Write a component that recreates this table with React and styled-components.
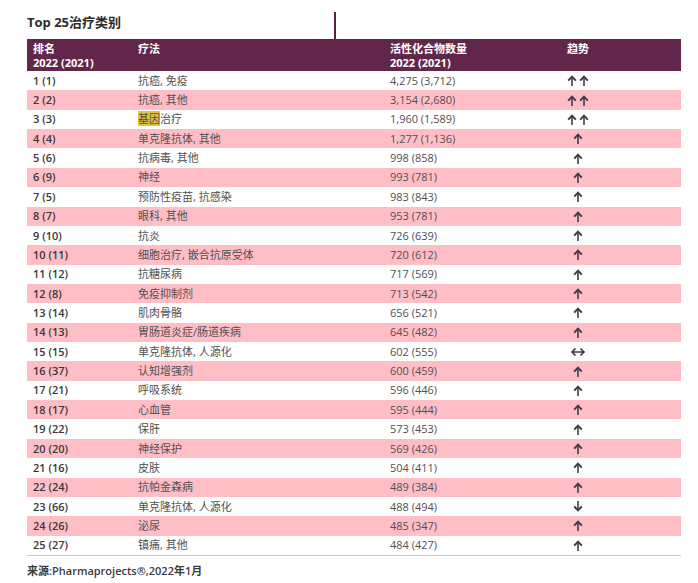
import styled, { createGlobalStyle } from 'styled-components';

const GlobalStyle = createGlobalStyle`
  body {
    margin: 0;
    background: #fff;
    font-family: 'Open Sans', 'Noto Sans CJK SC', sans-serif;
  }
`;

const rows = [
  ['1 (1)', '抗癌, 免疫', '4,275 (3,712)', 'up2'],
  ['2 (2)', '抗癌, 其他', '3,154 (2,680)', 'up2'],
  ['3 (3)', 'gene', '1,960 (1,589)', 'up2'],
  ['4 (4)', '单克隆抗体, 其他', '1,277 (1,136)', 'up'],
  ['5 (6)', '抗病毒, 其他', '998 (858)', 'up'],
  ['6 (9)', '神经', '993 (781)', 'up'],
  ['7 (5)', '预防性疫苗, 抗感染', '983 (843)', 'up'],
  ['8 (7)', '眼科, 其他', '953 (781)', 'up'],
  ['9 (10)', '抗炎', '726 (639)', 'up'],
  ['10 (11)', '细胞治疗, 嵌合抗原受体', '720 (612)', 'up'],
  ['11 (12)', '抗糖尿病', '717 (569)', 'up'],
  ['12 (8)', '免疫抑制剂', '713 (542)', 'up'],
  ['13 (14)', '肌肉骨骼', '656 (521)', 'up'],
  ['14 (13)', '胃肠道炎症/肠道疾病', '645 (482)', 'up'],
  ['15 (15)', '单克隆抗体, 人源化', '602 (555)', 'flat'],
  ['16 (37)', '认知增强剂', '600 (459)', 'up'],
  ['17 (21)', '呼吸系统', '596 (446)', 'up'],
  ['18 (17)', '心血管', '595 (444)', 'up'],
  ['19 (22)', '保肝', '573 (453)', 'up'],
  ['20 (20)', '神经保护', '569 (426)', 'up'],
  ['21 (16)', '皮肤', '504 (411)', 'up'],
  ['22 (24)', '抗帕金森病', '489 (384)', 'up'],
  ['23 (66)', '单克隆抗体, 人源化', '488 (494)', 'down'],
  ['24 (26)', '泌尿', '485 (347)', 'up'],
  ['25 (27)', '镇痛, 其他', '484 (427)', 'up'],
];

const Page = styled.div`
  padding-left: 27px;
  width: 654px;
`;

const TitleBar = styled.div`
  display: flex;
  align-items: flex-end;
  height: 39px;
`;

const Title = styled.div`
  width: 307px;
  align-self: center;
  padding-top: 4px;
  font-size: 13px;
  font-weight: 700;
  color: #2b2b2b;
`;

const Mark = styled.div`
  width: 2px;
  height: 27px;
  background: #5a2245;
`;

const Grid = styled.div`
  display: grid;
  grid-template-columns: 105px 252px 162px 52px 1fr;
  padding-left: 6px;
  align-items: center;
`;

const Head = styled(Grid)`
  height: 32px;
  align-items: start;
  padding-top: 3px;
  box-sizing: border-box;
  background: #62264b;
  color: #fff;
  font-size: 11px;
  font-weight: 700;
  line-height: 14px;
`;

const Row = styled(Grid)`
  height: 19.36px;
  background: ${(p) => (p.$pink ? '#ffbec6' : '#fff')};
  color: #505050;
  font-size: 11px;
  line-height: 14px;
`;

const Rank = styled.div`
  color: #383838;
  font-weight: 600;
`;

const Trend = styled.div`
  display: flex;
  justify-content: center;
  gap: 2px;
`;

const HeadTrend = styled.div`
  text-align: center;
`;

const Highlight = styled.span`
  background: #e2c23c;
`;

const Footer = styled.div`
  border-top: 1px solid #f2b6be;
  padding-top: 6px;
  font-size: 11px;
  font-weight: 600;
  color: #3a3a3a;
`;

function Arrow({ dir }) {
  if (dir === 'flat') {
    return (
      <svg width="16" height="10" viewBox="0 0 16 10">
        <path d="M2 5 H14 M5.5 1.5 L2 5 L5.5 8.5 M10.5 1.5 L14 5 L10.5 8.5" stroke="#3d3d48" strokeWidth="1.7" fill="none" />
      </svg>
    );
  }
  const rot = dir === 'down' ? 'rotate(180 5 5.5)' : undefined;
  return (
    <svg width="10" height="11" viewBox="0 0 10 11">
      <g transform={rot} stroke="#3d3d48" fill="none">
        <path d="M5 2 V11" strokeWidth="1.6" />
        <path d="M1.2 5.6 L5 1.6 L8.8 5.6" strokeWidth="2" />
      </g>
    </svg>
  );
}

export default function App() {
  return (
    <>
      <GlobalStyle />
      <Page>
        <TitleBar>
          <Title>Top 25治疗类别</Title>
          <Mark />
        </TitleBar>
        <Head>
          <div>排名<br />2022 (2021)</div>
          <div>疗法</div>
          <div>活性化合物数量<br />2022 (2021)</div>
          <HeadTrend>趋势</HeadTrend>
          <div />
        </Head>
        {rows.map((r, i) => (
          <Row key={i} $pink={i % 2 === 1}>
            <Rank>{r[0]}</Rank>
            <div>{r[1] === 'gene' ? <><Highlight>基因</Highlight>治疗</> : r[1]}</div>
            <div>{r[2]}</div>
            <Trend>
              <Arrow dir={r[3] === 'up2' ? 'up' : r[3]} />
              {r[3] === 'up2' && <Arrow dir="up" />}
            </Trend>
            <div />
          </Row>
        ))}
        <Footer>来源:Pharmaprojects®,2022年1月</Footer>
      </Page>
    </>
  );
}
